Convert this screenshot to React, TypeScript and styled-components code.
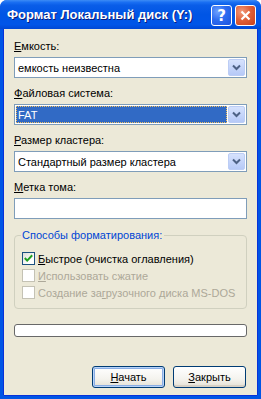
import React from "react";
import styled, { createGlobalStyle } from "styled-components";

const GlobalStyle = createGlobalStyle`
  html, body {
    margin: 0;
    padding: 0;
    background: #ffffff;
  }
  body {
    font-family: "Liberation Sans", Arial, sans-serif;
    font-size: 11px;
  }
`;

const Window = styled.div`
  width: 261px;
  height: 399px;
  display: flex;
  flex-direction: column;
  border-radius: 7px 7px 0 0;
  overflow: hidden;
  background: #0055e5;
`;

const TitleBar = styled.div`
  height: 29px;
  flex: 0 0 29px;
  display: flex;
  align-items: center;
  padding: 0 5px 0 7px;
  background: linear-gradient(
    #3d8cf5 0%,
    #1a6ff2 8%,
    #0a5de8 18%,
    #0055e5 50%,
    #0055e8 85%,
    #0047d4 100%
  );
`;

const Title = styled.div`
  flex: 1;
  color: #ffffff;
  font-family: "Liberation Sans", Arial, sans-serif;
  font-weight: bold;
  font-size: 13px;
  text-shadow: 1px 1px 0 #0a1c7a;
  white-space: nowrap;
`;

const CaptionButtons = styled.div`
  display: flex;
  gap: 3px;
  margin-top: 2px;
`;

const CaptionButton = styled.div<{ $close?: boolean }>`
  width: 21px;
  height: 21px;
  box-sizing: border-box;
  border: 1px solid #ffffff;
  border-radius: 3px;
  display: flex;
  align-items: center;
  justify-content: center;
  background: ${(p) =>
    p.$close
      ? "radial-gradient(circle at 30% 30%, #f29a7c 0%, #e0613a 45%, #c8401a 100%)"
      : "radial-gradient(circle at 30% 30%, #6ea2ff 0%, #2d6cf0 45%, #1a52de 100%)"};
  color: #ffffff;
  font-family: "DejaVu Sans", sans-serif;
  font-weight: bold;
  font-size: 15px;
`;

const Body = styled.div`
  flex: 1;
  display: flex;
  flex-direction: column;
  background: #ece9d8;
  margin: 0 4px 4px 4px;
  padding: 11px 10px 0 10px;
  box-shadow: -1px 0 0 #0831d9, 1px 0 0 #0831d9, 0 1px 0 #0831d9;
`;

const Field = styled.div`
  display: flex;
  flex-direction: column;
  margin-bottom: 9px;
`;

const Label = styled.div`
  height: 13px;
  line-height: 13px;
  color: #000000;
  margin-bottom: 4px;
  white-space: nowrap;
`;

const SelectBox = styled.div`
  height: 21px;
  box-sizing: border-box;
  border: 1px solid #7f9db9;
  background: #ffffff;
  display: flex;
  align-items: center;
  padding: 1px;
`;

const SelectText = styled.div<{ $selected?: boolean }>`
  flex: 1;
  height: 100%;
  display: flex;
  align-items: center;
  padding-left: 2px;
  margin-right: 1px;
  box-sizing: border-box;
  color: ${(p) => (p.$selected ? "#ffffff" : "#000000")};
  background: ${(p) => (p.$selected ? "#316ac5" : "transparent")};
  outline: ${(p) => (p.$selected ? "1px dotted #f0c060" : "none")};
  outline-offset: -1px;
  white-space: nowrap;
`;

const DropButton = styled.div`
  width: 17px;
  height: 17px;
  box-sizing: border-box;
  border: 1px solid #bccdf5;
  border-radius: 2px;
  background: linear-gradient(#d6e2fd, #b6c9f7);
  display: flex;
  align-items: center;
  justify-content: center;
`;

const TextInput = styled.div`
  height: 21px;
  box-sizing: border-box;
  border: 1px solid #7f9db9;
  background: #ffffff;
`;

const Group = styled.div`
  position: relative;
  margin-top: 7px;
  height: 74px;
  box-sizing: border-box;
  border: 1px solid #d0d0bf;
  border-radius: 4px;
  padding: 16px 0 0 7px;
  display: flex;
  flex-direction: column;
  gap: 4px;
`;

const Legend = styled.div`
  position: absolute;
  top: -7px;
  left: 6px;
  padding: 0 2px 0 1px;
  background: #ece9d8;
  color: #0046d5;
  line-height: 13px;
`;

const CheckRow = styled.div<{ $disabled?: boolean }>`
  display: flex;
  align-items: center;
  gap: 3px;
  height: 13px;
  color: ${(p) => (p.$disabled ? "#aca899" : "#000000")};
  white-space: nowrap;
`;

const Box = styled.div<{ $disabled?: boolean }>`
  width: 13px;
  height: 13px;
  box-sizing: border-box;
  border: 1px solid ${(p) => (p.$disabled ? "#c4c2b4" : "#1c5180")};
  background: ${(p) =>
    p.$disabled ? "#ffffff" : "linear-gradient(135deg, #dcdcd7 0%, #ffffff 70%)"};
  display: flex;
  align-items: center;
  justify-content: center;
`;

const Progress = styled.div`
  margin-top: 15px;
  height: 13px;
  box-sizing: border-box;
  border: 1px solid #686868;
  border-radius: 3px;
  background: #ffffff;
`;

const Buttons = styled.div`
  margin-top: 29px;
  display: flex;
  justify-content: flex-end;
  gap: 8px;
  padding-right: 1px;
`;

const Button = styled.div<{ $default?: boolean }>`
  width: 73px;
  height: 22px;
  box-sizing: border-box;
  border: 1px solid #003c74;
  border-radius: 3px;
  display: flex;
  align-items: center;
  justify-content: center;
  background: linear-gradient(#ffffff 0%, #f4f3ee 60%, #e3e0d4 100%);
  box-shadow: ${(p) =>
    p.$default
      ? "inset 0 0 0 1px #b8d3f8, inset 0 0 0 2px #89ade4"
      : "inset 0 -2px 0 #d6d0c5"};
  color: #000000;
`;

const Chevron = () => (
  <svg width="9" height="7" viewBox="0 0 9 7">
    <polyline points="1,1.5 4.5,5 8,1.5" fill="none" stroke="#4d6185" strokeWidth="2" />
  </svg>
);

const Check = () => (
  <svg width="9" height="9" viewBox="0 0 9 9">
    <polyline points="0.8,4 3.2,6.6 8.2,1.2" fill="none" stroke="#21a121" strokeWidth="2" />
  </svg>
);

const Select: React.FC<{ value: string; selected?: boolean }> = ({ value, selected }) => (
  <SelectBox>
    <SelectText $selected={selected}>{value}</SelectText>
    <DropButton>
      <Chevron />
    </DropButton>
  </SelectBox>
);

const App: React.FC = () => {
  return (
    <>
      <GlobalStyle />
      <Window>
        <TitleBar>
          <Title>Формат Локальный диск (Y:)</Title>
          <CaptionButtons>
            <CaptionButton>?</CaptionButton>
            <CaptionButton $close>
              <svg width="11" height="11" viewBox="0 0 11 11">
                <path d="M1.5 1.5 L9.5 9.5 M9.5 1.5 L1.5 9.5" stroke="#fff" strokeWidth="2.2" />
              </svg>
            </CaptionButton>
          </CaptionButtons>
        </TitleBar>
        <Body>
          <Field>
            <Label>
              <u>Е</u>мкость:
            </Label>
            <Select value="емкость неизвестна" />
          </Field>
          <Field>
            <Label>
              <u>Ф</u>айловая система:
            </Label>
            <Select value="FAT" selected />
          </Field>
          <Field>
            <Label>
              <u>Р</u>азмер кластера:
            </Label>
            <Select value="Стандартный размер кластера" />
          </Field>
          <Field>
            <Label>
              <u>М</u>етка тома:
            </Label>
            <TextInput />
          </Field>
          <Group>
            <Legend>Способы форматирования:</Legend>
            <CheckRow>
              <Box>
                <Check />
              </Box>
              <span>
                <u>Б</u>ыстрое (очистка оглавления)
              </span>
            </CheckRow>
            <CheckRow $disabled>
              <Box $disabled />
              <span>
                <u>И</u>спользовать сжатие
              </span>
            </CheckRow>
            <CheckRow $disabled>
              <Box $disabled />
              <span>
                Создание за<u>г</u>рузочного диска MS-DOS
              </span>
            </CheckRow>
          </Group>
          <Progress />
          <Buttons>
            <Button $default>
              <span>
                <u>Н</u>ачать
              </span>
            </Button>
            <Button>
              <span>
                <u>З</u>акрыть
              </span>
            </Button>
          </Buttons>
        </Body>
      </Window>
    </>
  );
};

export default App;
